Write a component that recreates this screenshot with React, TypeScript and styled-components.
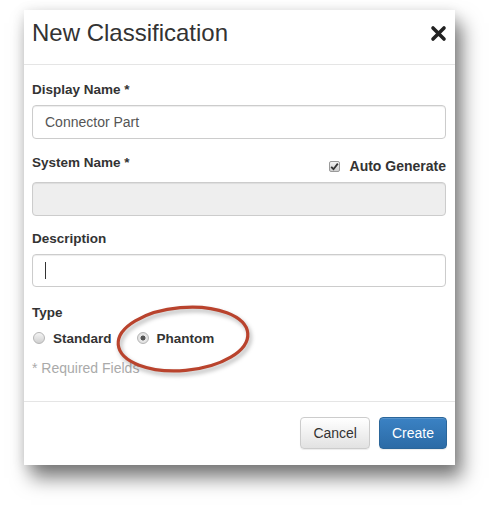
import React, { FC } from "react";
import styled, { createGlobalStyle } from "styled-components";

const GlobalStyle = createGlobalStyle`
  html, body {
    margin: 0;
    padding: 0;
    background: #fff;
  }
  body {
    font-family: "Liberation Sans", Arial, sans-serif;
    color: #333;
  }
`;

const App: FC = () => {
  return (
    <Page>
      <GlobalStyle />
      <Dialog>
        <Header>
          <Title>New Classification</Title>
          <CloseButton aria-label="Close">
            <svg width="17" height="17" viewBox="0 0 17 17">
              <path
                d="M3 3 L14 14 M14 3 L3 14"
                stroke="#222"
                strokeWidth="3.6"
                strokeLinecap="round"
              />
            </svg>
          </CloseButton>
        </Header>
        <Body>
          <Label>Display Name *</Label>
          <Field>Connector Part</Field>

          <LabelRow $gap={16}>
            <Label>System Name *</Label>
            <CheckLabel>
              <CheckBox>
                <svg width="9" height="9" viewBox="0 0 9 9">
                  <path
                    d="M1.2 4.8 L3.5 7.2 L7.8 1.6"
                    stroke="#333"
                    strokeWidth="1.8"
                    fill="none"
                  />
                </svg>
              </CheckBox>
              Auto Generate
            </CheckLabel>
          </LabelRow>
          <Field $disabled />

          <Label $top={15}>Description</Label>
          <Field $tall={33}>
            <Caret />
          </Field>

          <Label $top={18}>Type</Label>
          <RadioRow>
            <RadioOption>
              <Radio />
              Standard
            </RadioOption>
            <RadioOption>
              <Radio $checked />
              Phantom
            </RadioOption>
          </RadioRow>
          <Hint>* Required Fields</Hint>

          <Marker width="150" height="80" viewBox="0 0 150 80">
            <ellipse
              cx="75"
              cy="40"
              rx="65"
              ry="31.5"
              transform="rotate(-5 75 40)"
              fill="none"
              stroke="#b9432d"
              strokeWidth="3.2"
            />
          </Marker>
        </Body>
        <Footer>
          <Button>Cancel</Button>
          <Button $primary>Create</Button>
        </Footer>
      </Dialog>
    </Page>
  );
};

export default App;

const Page = styled.div`
  padding: 10px 0 0 24px;
  width: 495px;
  height: 506px;
  box-sizing: border-box;
`;
const Dialog = styled.div`
  position: relative;
  width: 431px;
  height: 455px;
  background: #fff;
  display: flex;
  flex-direction: column;
  box-shadow: 7px 13px 18px rgba(0, 0, 0, 0.5), 0 2px 12px rgba(0, 0, 0, 0.12);
`;
const Header = styled.div`
  height: 55px;
  box-sizing: border-box;
  border-bottom: 1px solid #e5e5e5;
  display: flex;
  align-items: flex-start;
  justify-content: space-between;
  padding: 0 8px 0 8px;
`;
const Title = styled.h4`
  margin: 0;
  margin-top: 9px;
  font-size: 24px;
  line-height: 28px;
  font-weight: normal;
  color: #333;
`;
const CloseButton = styled.button`
  margin-top: 15px;
  margin-right: 0;
  padding: 0;
  border: 0;
  background: none;
  display: flex;
  cursor: pointer;
`;
const Body = styled.div`
  flex: 1;
  position: relative;
  padding: 17px 9px 0 8px;
  display: flex;
  flex-direction: column;
`;
const Label = styled.label<{ $top?: number }>`
  display: block;
  margin-top: ${({ $top }) => $top || 0}px;
  margin-bottom: 7px;
  height: 16px;
  line-height: 16px;
  font-size: 13.5px;
  font-weight: bold;
  color: #333;
`;
const LabelRow = styled.div<{ $gap: number }>`
  margin-top: ${({ $gap }) => $gap}px;
  display: flex;
  justify-content: space-between;
  align-items: flex-start;
  height: 27px;
  & > ${Label} {
    margin-bottom: 0;
  }
`;
const CheckLabel = styled.span`
  display: flex;
  align-items: center;
  gap: 10px;
  margin-top: 1px;
  font-size: 14px;
  font-weight: bold;
  line-height: 20px;
  color: #333;
`;
const CheckBox = styled.span`
  width: 11px;
  height: 11px;
  box-sizing: border-box;
  border: 1px solid #9a9a9a;
  border-radius: 2px;
  background: linear-gradient(#f2f2f2, #cfcfcf);
  display: flex;
  align-items: center;
  justify-content: center;
`;
const Field = styled.div<{ $disabled?: boolean; $tall?: number }>`
  height: ${({ $tall }) => $tall || 34}px;
  box-sizing: border-box;
  border: 1px solid #ccc;
  border-radius: 4px;
  background: ${({ $disabled }) => ($disabled ? "#eee" : "#fff")};
  box-shadow: inset 0 1px 1px rgba(0, 0, 0, 0.075);
  padding: 0 12px;
  display: flex;
  align-items: center;
  font-size: 14px;
  color: #555;
`;
const Caret = styled.span`
  width: 1px;
  height: 17px;
  background: #333;
`;
const RadioRow = styled.div`
  display: flex;
  align-items: center;
  gap: 25px;
  height: 20px;
  margin-left: 1px;
`;
const RadioOption = styled.label`
  display: flex;
  align-items: center;
  gap: 8px;
  font-size: 13.5px;
  font-weight: bold;
  color: #333;
`;
const Radio = styled.span<{ $checked?: boolean }>`
  width: 12px;
  height: 12px;
  box-sizing: border-box;
  border-radius: 50%;
  border: 1px solid #b5b5b5;
  background: ${({ $checked }) =>
    $checked
      ? "radial-gradient(circle, #555 0, #555 2.2px, #e9e9e9 2.8px, #d6d6d6 100%)"
      : "linear-gradient(#f4f4f4, #d0d0d0)"};
`;
const Hint = styled.div`
  margin-top: 12px;
  font-size: 14px;
  line-height: 16px;
  color: #aaa;
`;
const Marker = styled.svg`
  position: absolute;
  left: 84px;
  top: 234px;
  overflow: visible;
  filter: drop-shadow(2px 3px 2px rgba(0, 0, 0, 0.3));
  pointer-events: none;
`;
const Footer = styled.div`
  border-top: 1px solid #e5e5e5;
  padding: 15px 8px 16px;
  display: flex;
  justify-content: flex-end;
  gap: 9px;
`;
const Button = styled.button<{ $primary?: boolean }>`
  height: 32px;
  padding: 0 12px;
  border-radius: 4px;
  font-family: "Liberation Sans", Arial, sans-serif;
  font-size: 14px;
  cursor: pointer;
  border: 1px solid ${({ $primary }) => ($primary ? "#2b669a" : "#ccc")};
  color: ${({ $primary }) => ($primary ? "#fff" : "#333")};
  background: ${({ $primary }) =>
    $primary
      ? "linear-gradient(#3b82c4, #2c6ba6)"
      : "linear-gradient(#fff, #e2e2e2)"};
  box-shadow: inset 0 1px 0 rgba(255, 255, 255, 0.15), 0 1px 1px rgba(0, 0, 0, 0.075);
`;
